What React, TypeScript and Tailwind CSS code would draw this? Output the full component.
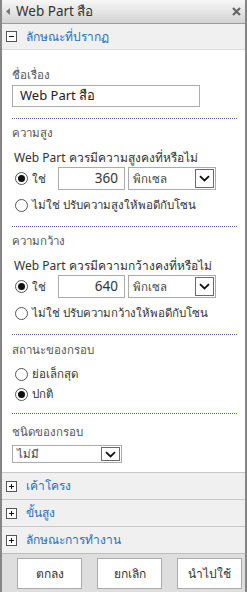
import React from 'react';

const FONT = "font-['Segoe_UI','Noto_Sans','DejaVu_Sans',sans-serif]";

function Chevron() {
  return (
    <svg width="11" height="7" viewBox="0 0 11 7">
      <path d="M1 1.2 L5.5 5.5 L10 1.2" fill="none" stroke="#111" strokeWidth="1.8" />
    </svg>
  );
}

function Select({ value, className }: { value: string; className: string }) {
  return (
    <div className={`flex items-stretch border border-[#ababab] bg-white ${className}`}>
      <div className="flex-1 pl-1 flex items-center text-[11.5px] text-[#444]">{value}</div>
      <div className="w-[19px] m-[1px] border border-[#6a6a6a] flex items-center justify-center bg-white">
        <Chevron />
      </div>
    </div>
  );
}

function Radio({ checked, label }: { checked?: boolean; label: string }) {
  return (
    <div className="flex items-center gap-[4px]">
      <span className="w-[13px] h-[13px] rounded-full border border-[#555] bg-white flex items-center justify-center">
        {checked && <span className="w-[7px] h-[7px] rounded-full bg-[#111]" />}
      </span>
      <span className="text-[11.5px] text-[#333] leading-[18px]">{label}</span>
    </div>
  );
}

function Dotted({ className = '' }: { className?: string }) {
  return <div className={`border-t border-dotted border-[#3f62b8] ${className}`} />;
}

function Box({ minus }: { minus?: boolean }) {
  return (
    <span className="w-[11px] h-[11px] border border-[#555] bg-white flex items-center justify-center relative">
      <span className="absolute w-[5px] h-[1px] bg-[#111]" />
      {!minus && <span className="absolute w-[1px] h-[5px] bg-[#111]" />}
    </span>
  );
}

function SizeGroup({ label, question, value, no }: { label: string; question: string; value: string; no: string }) {
  return (
    <div>
      <div className="mt-[6px] text-[11.5px] leading-[16px] text-[#555]">{label}</div>
      <div className="mt-[9px] ml-[2px] text-[12px] leading-[16px] text-[#333] whitespace-nowrap">{question}</div>
      <div className="mt-[1px] ml-[3px] flex items-center h-[23px]">
        <Radio checked label="ใช่" />
        <div className="ml-[12px] w-[67px] h-[23px] border border-[#ababab] flex items-center justify-end pr-[6px] text-[13.5px] text-[#333]">{value}</div>
        <Select value="พิกเซล" className="ml-[3px] w-[88px] h-[23px]" />
      </div>
      <div className="mt-[6px] ml-[3px]">
        <Radio label={no} />
      </div>
      <Dotted className="mt-[12px]" />
    </div>
  );
}

function Collapsed({ label }: { label: string }) {
  return (
    <div className="h-[27px] shrink-0 bg-[#f0f0f0] border-t border-[#c8c8c8] flex items-center pl-[4px]">
      <Box />
      <span className="ml-[9px] text-[12px] text-[#1f6fc5]">{label}</span>
    </div>
  );
}

export default function App() {
  return (
    <div className={`w-[247px] h-[592px] border-x-2 border-[#868686] flex flex-col bg-white ${FONT}`}>
      <div className="h-[24px] shrink-0 bg-gradient-to-b from-[#f7f7f7] to-[#d3d3d3] border-b border-[#9d9d9d] flex items-center">
        <svg width="4" height="7" viewBox="0 0 4 7" className="ml-[4px]">
          <path d="M4 0 L0 3.5 L4 7 Z" fill="#777" />
        </svg>
        <span className="ml-[6px] text-[13.5px] text-[#333] leading-none">Web Part สือ</span>
        <svg width="9" height="9" viewBox="0 0 9 9" className="ml-auto mr-[4px]">
          <path d="M1 1 L8 8 M8 1 L1 8" stroke="#666" strokeWidth="2.2" />
        </svg>
      </div>

      <div className="h-[26px] shrink-0 bg-[#f0f0f0] border-b border-[#dcdcdc] flex items-center pl-[4px]">
        <Box minus />
        <span className="ml-[9px] text-[12px] text-[#1f6fc5]">ลักษณะที่ปรากฏ</span>
      </div>

      <div className="flex-1 min-h-0 pl-[10px] pr-[8px]">
        <div className="mt-[17px] text-[11.5px] leading-[16px] text-[#555]">ชื่อเรื่อง</div>
        <div className="mt-[2px] w-[188px] h-[22px] border border-[#ababab] flex items-center pl-[7px] text-[13px] text-[#222]">
          Web Part สือ
        </div>
        <Dotted className="mt-[11px]" />

        <SizeGroup label="ความสูง" question="Web Part ควรมีความสูงคงที่หรือไม่" value="360" no="ไม่ใช่ ปรับความสูงให้พอดีกับโซน" />
        <SizeGroup label="ความกว้าง" question="Web Part ควรมีความกว้างคงที่หรือไม่" value="640" no="ไม่ใช่ ปรับความกว้างให้พอดีกับโซน" />

        <div className="mt-[7px] text-[11.5px] leading-[16px] text-[#555]">สถานะของกรอบ</div>
        <div className="mt-[7px] ml-[3px]">
          <Radio label="ย่อเล็กสุด" />
        </div>
        <div className="mt-[2px] ml-[3px]">
          <Radio checked label="ปกติ" />
        </div>
        <Dotted className="mt-[10px]" />

        <div className="mt-[10px] text-[11.5px] leading-[16px] text-[#555]">ชนิดของกรอบ</div>
        <Select value="ไม่มี" className="mt-[5px] w-[110px] h-[18px]" />
      </div>

      <Collapsed label="เค้าโครง" />
      <Collapsed label="ขั้นสูง" />
      <Collapsed label="ลักษณะการทำงาน" />

      <div className="h-[39px] shrink-0 bg-[#dedede] border-t border-[#bdbdbd] flex items-start pt-[4px] pl-[15px] gap-[15px]">
        {['ตกลง', 'ยกเลิก', 'นำไปใช้'].map((b) => (
          <div key={b} className="w-[65px] h-[31px] bg-white border border-[#ababab] flex items-center justify-center text-[12px] text-[#333]">
            {b}
          </div>
        ))}
      </div>
    </div>
  );
}
